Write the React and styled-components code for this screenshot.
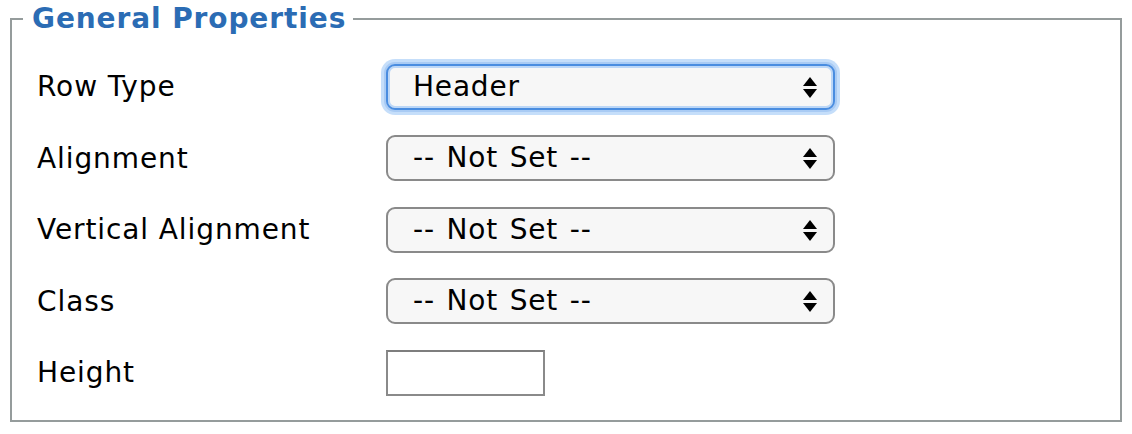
import React from 'react';
import styled, { createGlobalStyle } from 'styled-components';

const GlobalStyle = createGlobalStyle`
  body {
    margin: 0;
    background: #ffffff;
    font-family: Verdana, "DejaVu Sans", sans-serif;
  }
`;

const Page = styled.div`
  padding: 1px 10px 0;
`;

const Fieldset = styled.fieldset`
  margin: 0;
  padding: 14px 0 11px 0;
  border: 2px solid #959c9c;
  min-width: 0;
`;

const Legend = styled.legend`
  margin-left: 11px;
  padding: 0 7px 0 9px;
  color: #2b6cb4;
  font-weight: bold;
  font-size: 28px;
  letter-spacing: 0.9px;
  line-height: 36px;
`;

const Grid = styled.div`
  display: grid;
  grid-template-columns: 349px 1fr;
  grid-auto-rows: 71.5px;
  align-items: center;
  padding-left: 25px;
`;

const Label = styled.label`
  font-size: 28px;
  letter-spacing: 0.9px;
  color: #000;
`;

const SelectBox = styled.div`
  position: relative;
  width: 449px;
  height: 46px;
  box-sizing: border-box;
  border: 2px solid ${({ $focused }) => ($focused ? '#4a8de0' : '#8a8a8a')};
  border-radius: 9px;
  background: #f7f7f7;
  box-shadow: ${({ $focused }) =>
    $focused ? '0 0 0 2px #a9cbf4, 0 0 0 5px rgba(150,195,245,0.55), inset 0 0 0 2px #bcd7f7' : 'none'};
  display: flex;
  align-items: center;
  padding: 0 16px 0 25px;
  font-size: 28px;
  letter-spacing: 0.8px;
  word-spacing: 2px;
  color: #000;
`;

const SelectText = styled.span`
  flex: 1;
  line-height: 1;
`;

const Arrows = styled.svg`
  width: 14px;
  height: 24px;
`;

const TextInput = styled.input`
  width: 159px;
  height: 46px;
  box-sizing: border-box;
  border: 2px solid #8a8a8a;
  border-top-color: #7e7e7e;
  background: #fff;
  padding: 0;
  margin: 0;
  outline: none;
`;

const Select = ({ value, focused }) => (
  <SelectBox $focused={focused}>
    <SelectText>{value}</SelectText>
    <Arrows viewBox="0 0 14 24">
      <path d="M7 2 L14 11 L0 11 Z" fill="#000" />
      <path d="M0 14 L14 14 L7 23 Z" fill="#000" />
    </Arrows>
  </SelectBox>
);

const rows = [
  { label: 'Row Type', value: 'Header', focused: true },
  { label: 'Alignment', value: '-- Not Set --' },
  { label: 'Vertical Alignment', value: '-- Not Set --' },
  { label: 'Class', value: '-- Not Set --' },
];

export default function App() {
  return (
    <Page>
      <GlobalStyle />
      <Fieldset>
        <Legend>General Properties</Legend>
        <Grid>
          {rows.map((r) => (
            <React.Fragment key={r.label}>
              <Label>{r.label}</Label>
              <Select value={r.value} focused={r.focused} />
            </React.Fragment>
          ))}
          <Label>Height</Label>
          <TextInput type="text" />
        </Grid>
      </Fieldset>
    </Page>
  );
}
